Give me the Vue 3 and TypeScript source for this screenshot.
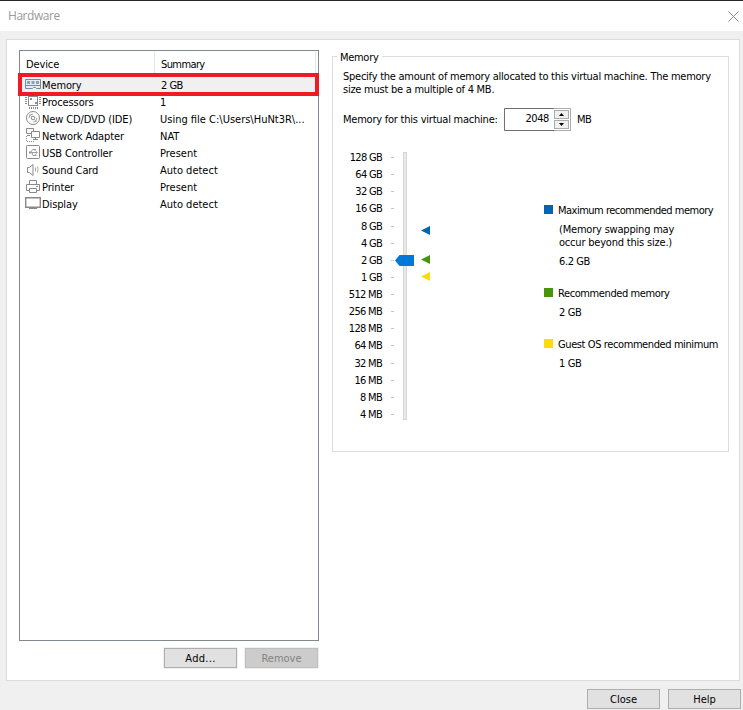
<script setup lang="ts">
interface Device {
  icon: string
  name: string
  summary: string
}

const devices: Device[] = [
  { icon: 'memory', name: 'Memory', summary: '2 GB' },
  { icon: 'cpu', name: 'Processors', summary: '1' },
  { icon: 'disc', name: 'New CD/DVD (IDE)', summary: 'Using file C:\\Users\\HuNt3R\\...' },
  { icon: 'network', name: 'Network Adapter', summary: 'NAT' },
  { icon: 'usb', name: 'USB Controller', summary: 'Present' },
  { icon: 'sound', name: 'Sound Card', summary: 'Auto detect' },
  { icon: 'printer', name: 'Printer', summary: 'Present' },
  { icon: 'display', name: 'Display', summary: 'Auto detect' },
]

const sizes: string[] = [
  '128 GB', '64 GB', '32 GB', '16 GB', '8 GB', '4 GB', '2 GB', '1 GB',
  '512 MB', '256 MB', '128 MB', '64 MB', '32 MB', '16 MB', '8 MB', '4 MB',
]
</script>

<template>
  <div class="window">
    <header class="titlebar">
      <span class="title">Hardware</span>
      <svg class="close" width="11" height="11" viewBox="0 0 11 11"><path d="M.5 .5l10 10M10.500 .5l-10 10" /></svg>
    </header>

    <main class="panel">
      <section class="left">
        <div class="list">
          <div class="row head">
            <span class="device">Device</span>
            <span class="summary">Summary</span>
          </div>
          <div v-for="(d, i) in devices" :key="d.name" class="row" :class="{ selected: i === 0 }">
            <svg class="icon" width="17" height="17" viewBox="0 0 17 17">
              <g v-if="d.icon === 'memory'">
                <path d="M.5 3.500h15v9h-4l-1-1h-2l-1 1h-7z" fill="#e3edf3" stroke="#758b9b" />
                <path d="M1 9.500h15" stroke="#758b9b" />
                <path d="M2 5h3v3H2zM6.500 5h3v3h-3zM11 5h3v3h-3z" fill="#8da1b0" stroke="none" />
              </g>
              <g v-else-if="d.icon === 'cpu'">
                <path d="M3.500 3v10M12.500 3v10M3 3.500h10M3 12.500h10" />
                <path d="M0 4.500h2M0 6.500h2M0 8.500h2M0 10.500h2M14 4.500h2M14 6.500h2M14 8.500h2M14 10.500h2M4.500 14v2M6.500 14v2M8.500 14v2M10.500 14v2M12.500 14v2" />
                <path d="M5 5h2v2H5zM10 9h2v2h-2z" fill="#8a8a8a" stroke="none" />
              </g>
              <g v-else-if="d.icon === 'disc'">
                <circle cx="8" cy="8" r="6.500" />
                <circle cx="8" cy="8" r="1.800" />
                <path d="M4 8A4 4 0 0 1 8 4M12 8A4 4 0 0 1 8 12M4.500 4.500l2 2M9.500 9.500l2 2" stroke="#a5a5a5" />
              </g>
              <g v-else-if="d.icon === 'network'">
                <path d="M1.500 1.500h7v5h-7zM2 8.500h3" fill="#fff" />
                <path d="M6.500 4.500h8v6h-8z" fill="#fff" />
                <path d="M10.500 11v2M8 12.500h5" />
                <path d="M1.500 9v6M2 14.500h8" stroke-dasharray="1 1" />
              </g>
              <g v-else-if="d.icon === 'usb'">
                <rect x="1.500" y="1.500" width="13" height="13" rx="1" />
                <path d="M4 8.500h8M6 8l1.500-2.500h2M7 9l1 2.500h2" stroke="#a0a0a0" />
                <path d="M4 7.500h2v2H4zM9 5h2v1.500H9zM9.500 10.500h2v1.500h-2zM11 7l2 1.500-2 1.500z" fill="#999" stroke="none" />
              </g>
              <g v-else-if="d.icon === 'sound'">
                <path d="M2.500 6.500h2l3.500-3v11l-3.500-3h-2z" />
                <path d="M10.500 6.500v4M12.500 5.500q1 3 0 6" stroke="#a8a8a8" />
              </g>
              <g v-else-if="d.icon === 'printer'">
                <path d="M4.500 6V2.500h7V6M4 12.500H1.500v-6h13v6H12M4.500 10.500h7v4h-7z" />
                <path d="M11 8.500h2" />
              </g>
              <g v-else>
                <path d="M.7 2.700h14.600v9.600H.7z" stroke-width="1.400" />
                <path d="M4 13.500h8" />
              </g>
            </svg>
            <span class="device">{{ d.name }}</span>
            <span class="summary">{{ d.summary }}</span>
          </div>
          <div class="highlight"></div>
        </div>
        <div class="actions">
          <button class="btn haloed add">Add...</button>
          <button class="btn haloed disabled" disabled>Remove</button>
        </div>
      </section>

      <section class="group">
        <h2 class="legend">Memory</h2>
        <p class="intro">
          Specify the amount of memory allocated to this virtual machine. The memory<br>size must be a multiple of 4 MB.
        </p>
        <div class="field">
          <label class="label">Memory for this virtual machine:</label>
          <div class="spinner">
            <span class="value">2048</span>
            <span class="arrows">
              <span class="arrow"><svg width="5" height="3" viewBox="0 0 5 3"><path d="M0 3L2.500 0 5 3z" /></svg></span>
              <span class="arrow"><svg width="5" height="3" viewBox="0 0 5 3"><path d="M0 0L2.500 3 5 0z" /></svg></span>
            </span>
          </div>
          <span class="unit">MB</span>
        </div>
        <div class="body">
          <div class="scale">
            <div v-for="s in sizes" :key="s" class="step"><span>{{ s }}</span><i class="tick"></i></div>
          </div>
          <div class="slider">
            <div class="track"></div>
            <svg class="thumb" width="19" height="11" viewBox="0 0 19 11"><path d="M0 5.500L4.500 0H19v11H4.500z" fill="#0078d7" /></svg>
            <svg class="marker max" width="9" height="9" viewBox="0 0 9 9"><path d="M0 4.500L9 0v9z" fill="#0066ae" /></svg>
            <svg class="marker rec" width="9" height="9" viewBox="0 0 9 9"><path d="M0 4.500L9 0v9z" fill="#46960c" /></svg>
            <svg class="marker min" width="9" height="9" viewBox="0 0 9 9"><path d="M0 4.500L9 0v9z" fill="#fedb0b" /></svg>
          </div>
          <dl class="key">
            <dt class="maximum"><i class="swatch blue"></i><span>Maximum recommended memory</span></dt>
            <dd class="note">(Memory swapping may<br>occur beyond this size.)</dd>
            <dd class="amount">6.2 GB</dd>
            <dt><i class="swatch green"></i><span>Recommended memory</span></dt>
            <dd class="amount">2 GB</dd>
            <dt><i class="swatch yellow"></i><span>Guest OS recommended minimum</span></dt>
            <dd class="amount">1 GB</dd>
          </dl>
        </div>
      </section>
    </main>

    <footer class="footer">
      <button class="btn">Close</button>
      <button class="btn">Help</button>
    </footer>
  </div>
</template>

<style>
body { margin: 0; overflow: hidden; }
</style>

<style scoped>
* { box-sizing: border-box; }
.window {
  display: flex; flex-direction: column; width: 743px; height: 710px;
  background: #f0f0f0; border-top: 1px solid #262626; color: #000;
  font: 11px/13px Tahoma, "DejaVu Sans Condensed", "DejaVu Sans", sans-serif;
  white-space: nowrap;
}
.titlebar {
  display: flex; justify-content: space-between; align-items: center; height: 30px;
  padding: 0 4px 0 8px; background: #fff; color: #999;
  font: 12px/16px "Segoe UI", "Open Sans", sans-serif; letter-spacing: -0.45px;
}
.close { stroke: #888; stroke-width: 1; }
.panel {
  display: flex; gap: 13px; width: 734px; height: 642px; margin: 8px 0 0 6px;
  padding: 10px 0 0 12px; background: #fff; border: 1px solid #dcdcdc;
}
.left { flex: none; width: 300px; }
.list { position: relative; height: 591px; border: 1px solid #828790; }
.row { display: flex; align-items: center; height: 17px; padding-left: 4px; margin: 0 1px; }
.row.head { height: 25px; padding: 0 0 0 5px; }
.row.selected { background: #f0f0f0; }
.icon { flex: none; fill: none; stroke: #8a8a8a; stroke-width: 1; }
.device { width: 118px; padding-top: 2px; letter-spacing: -0.12px; }
.summary { padding-top: 2px; }
.selected .summary { padding-left: 1px; letter-spacing: -0.5px; }
.head .device { width: 128px; }
.head .summary {
  display: flex; align-items: center; align-self: stretch; flex: 1; margin-right: 1px;
  padding-left: 6px; border: solid #e5e5e5; border-width: 0 1px; letter-spacing: -0.6px;
}
.highlight { position: absolute; left: -2px; top: 22px; width: 301px; height: 23px; border: 4px solid #ed1c24; }
.actions { display: flex; justify-content: flex-end; gap: 8px; padding: 7px 1px 0 0; }
.btn {
  width: 73px; height: 20px; margin: 0; padding: 0; color: #000; background: #e1e1e1;
  border: 1px solid #adadad; font: inherit; text-align: center;
}
.btn.haloed { box-shadow: 0 0 0 1px #f0f0f0; }
.btn.add { letter-spacing: 0.3px; }
.btn.disabled { color: #838383; background: #ccc; border-color: #bfbfbf; }
.group { flex: none; width: 397px; height: 396px; margin-top: 6px; padding: 0 10px; border: 1px solid #dcdcdc; }
.legend {
  width: 45px; height: 13px; margin: -6px 0 0 -6px; padding: 0 0 0 3px;
  background: #fff; font: inherit; letter-spacing: -0.3px;
}
.intro { margin: 6px 0 0; letter-spacing: -0.25px; }
.field { display: flex; align-items: center; gap: 6px; height: 23px; margin-top: 12px; }
.label { width: 155px; letter-spacing: -0.23px; }
.spinner { display: flex; width: 67px; height: 23px; border: 1px solid #acacac; border-left-color: #707070; background: #fff; }
.value {
  width: 49px; height: 23px; margin: -1px 0; padding: 3px 5px 0 0; text-align: right;
  border: solid #707070; border-width: 1px 0; letter-spacing: -0.4px;
}
.unit { letter-spacing: -0.5px; }
.arrows { display: flex; flex-direction: column; gap: 1px; padding: 1px 0; }
.arrow { display: flex; align-items: center; justify-content: center; width: 15px; height: 9px; background: #f0f0f0; border: 1px solid #acacac; }
.arrow svg { display: block; }
.body { display: flex; height: 290px; }
.scale { flex: none; width: 51px; padding-top: 18px; letter-spacing: -0.7px; }
.step { display: flex; align-items: center; justify-content: flex-end; gap: 9px; height: 17.13px; }
.tick { width: 3px; height: 1px; background: #c4c4c4; }
.slider { position: relative; flex: none; width: 150px; padding: 21px 0 0 9px; }
.track { width: 4px; height: 268px; background: #e7eaea; border: 1px solid #d6d6d6; }
.thumb { position: absolute; left: 1px; top: 124px; }
.marker { position: absolute; left: 27px; }
.max { top: 95px; }
.rec { top: 124px; }
.min { top: 141px; }
.key { flex: none; margin: 73px 0 0; letter-spacing: -0.4px; }
.key dt { display: flex; align-items: center; gap: 5px; height: 13px; }
.key dt.maximum { letter-spacing: -0.5px; }
.key dd { margin: 6px 0 0 15px; }
.key .note { letter-spacing: -0.2px; }
.amount + dt { margin-top: 19px; }
.swatch { width: 9px; height: 9px; margin-bottom: 2px; }
.blue { background: #0066ae; }
.green { background: #46960c; }
.yellow { background: #fedb0b; }
.footer { display: flex; justify-content: flex-end; gap: 8px; padding: 8px 2px 0 0; }
</style>
